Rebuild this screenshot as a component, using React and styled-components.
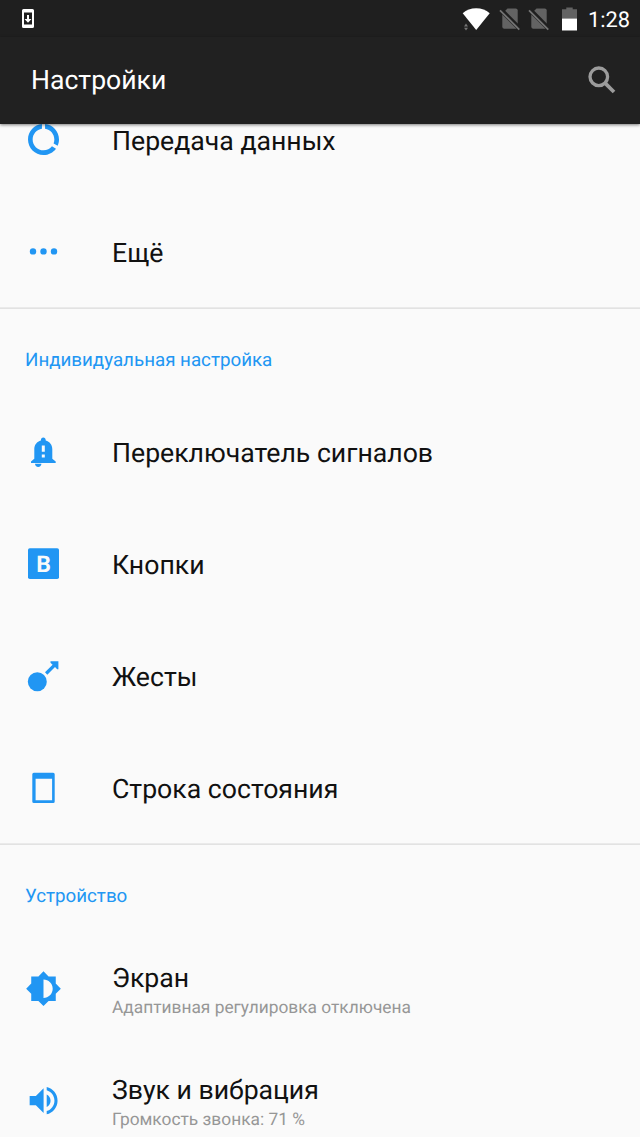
import React from "react";
import styled, { createGlobalStyle } from "styled-components";

const BLUE = "#2196f3";

const sections = [
  {
    rows: [
      { icon: "data", title: "Передача данных" },
      { icon: "more", title: "Ещё" },
    ],
  },
  {
    header: "Индивидуальная настройка",
    rows: [
      { icon: "bell", title: "Переключатель сигналов" },
      { icon: "buttons", title: "Кнопки" },
      { icon: "gesture", title: "Жесты" },
      { icon: "statusbar", title: "Строка состояния" },
    ],
  },
  {
    header: "Устройство",
    rows: [
      { icon: "display", title: "Экран", summary: "Адаптивная регулировка отключена" },
      { icon: "sound", title: "Звук и вибрация", summary: "Громкость звонка: 71 %" },
    ],
  },
];

const icons = {
  data: (
    <path
      transform="translate(0.9 0.9) scale(1.55)"
      d="M13 2.05v3.03c3.39.49 6 3.39 6 6.92 0 .9-.18 1.75-.48 2.54l2.6 1.53c.56-1.24.88-2.62.88-4.07 0-5.18-3.95-9.45-9-9.95zM12 19c-3.87 0-7-3.13-7-7 0-3.53 2.61-6.43 6-6.92V2.05c-5.06.5-9 4.76-9 9.95 0 5.52 4.47 10 9.99 10 3.31 0 6.24-1.61 8.06-4.09l-2.6-1.53C16.17 17.98 14.21 19 12 19z"
    />
  ),
  more: (
    <>
      <circle cx="9" cy="19.4" r="3.2" />
      <circle cx="19.5" cy="19.4" r="3.2" />
      <circle cx="30" cy="19.4" r="3.2" />
    </>
  ),
  bell: (
    <>
      <path
        fillRule="evenodd"
        d="M19.3 5.4c1.4 0 2.4 1 2.4 2.6v.5c4 1.1 6.6 4.4 6.6 8.7v9.6l3.4 2.8V31H7v-1.4l3.3-2.8v-9.6c0-4.3 2.6-7.6 6.6-8.7V8c0-1.6 1-2.6 2.4-2.6zM17.8 13.6v6.2h3v-6.2zM17.8 22.4v3.2h3v-3.2z"
      />
      <path d="M11 31.8h6.4c0 1.9-1.4 3.2-3.2 3.2S11 33.7 11 31.8z" />
    </>
  ),
  buttons: (
    <>
      <rect x="4" y="4.3" width="31" height="30.7" rx="1.8" />
      <text x="19.5" y="28.2" fill="#fafafa" fontSize="23" fontWeight="700" textAnchor="middle">
        B
      </text>
    </>
  ),
  gesture: (
    <>
      <circle cx="13.3" cy="25.7" r="9.5" />
      <path d="M26.5 5.3h7.9v8h-1.2l-2.2-2.2-7.7 7.6-2.3-2.4 7.6-7.5-2.1-2z" />
    </>
  ),
  statusbar: (
    <path
      fillRule="evenodd"
      d="M9.8 4.7h19.4q1.5 0 1.5 1.5v27.3q0 1.5-1.5 1.5H9.8q-1.5 0-1.5-1.5V6.2q0-1.5 1.5-1.5zM11.6 10.7v21.6h16.5V10.7z"
    />
  ),
  display: (
    <path
      transform="translate(1.1 2.3) scale(1.533)"
      d="M20 15.31L23.31 12 20 8.69V4h-4.69L12 .69 8.69 4H4v4.69L.69 12 4 15.31V20h4.69L12 23.31 15.31 20H20v-4.69zM12 18V6c3.31 0 6 2.69 6 6s-2.69 6-6 6z"
    />
  ),
  sound: (
    <path
      transform="translate(1 2.1) scale(1.55)"
      d="M3 9v6h4l5 5V4L7 9H3zm13.5 3c0-1.77-1.02-3.29-2.5-4.03v8.05c1.48-.73 2.5-2.25 2.5-4.02zM14 3.23v2.06c2.89.86 5 3.54 5 6.71s-2.11 5.85-5 6.71v2.06c4.01-.91 7-4.49 7-8.77s-2.99-7.86-7-8.77z"
    />
  ),
};

function NoSim() {
  return (
    <svg width="22" height="24" viewBox="0 0 22 24">
      <path fill="#636363" d="M8.5 1.5h8.2q2 0 2 2v16.2q0 2-2 2H5.3q-2 0-2-2V6.7z" />
      <path stroke="#1f1f1f" strokeWidth="4.6" d="M1.6 2.5L21.5 22.4" />
      <path stroke="#757575" strokeWidth="1.7" d="M1 3.3L20.3 22.6" />
    </svg>
  );
}

export default function App() {
  return (
    <>
      <GlobalStyle />
      <Screen>
        <StatusBar>
          <svg width="12" height="19" viewBox="0 0 12 19">
            <path
              fill="#fff"
              fillRule="evenodd"
              d="M1.5 0h9Q12 0 12 1.5v16q0 1.5-1.5 1.5h-9Q0 19 0 17.5v-16Q0 0 1.5 0zM2 3.5v12h8v-12z"
            />
            <path fill="#fff" d="M5 6h2v4h2.5L6 13.7 2.5 10H5z" />
          </svg>
          <StatusIcons>
            <Wifi width="30" height="24" viewBox="0 0 30 24">
              <path fill="#fff" d="M2.7 6.2C6.3 3.1 11 1.3 16.2 1.3s9.8 1.8 13.5 4.9L16.2 23z" />
              <path fill="#757575" d="M4 19.5L6 16.5l2 3zM4 20.8h4L6 23.5z" />
            </Wifi>
            <NoSim />
            <NoSim />
            <Battery width="15" height="24" viewBox="0 0 15 24">
              <path fill="#636363" d="M4.3 .5h6.4v1.8H15v9.2H0V2.3h4.3z" />
              <path fill="#fff" d="M0 11.5h15v12H0z" />
            </Battery>
            <Clock>1:28</Clock>
          </StatusIcons>
        </StatusBar>
        <AppBar>
          <Heading>Настройки</Heading>
          <svg width="28" height="28" viewBox="0 0 28 28">
            <circle cx="10.8" cy="10.8" r="8.8" fill="none" stroke="#9c9c9c" strokeWidth="3.3" />
            <path stroke="#9c9c9c" strokeWidth="3.7" d="M16.6 16.6L26 26" />
          </svg>
        </AppBar>
        <List>
          {sections.map((section, index) => (
            <Section key={index} $first={index === 0}>
              {section.header && <SectionHeader>{section.header}</SectionHeader>}
              {section.rows.map((row) => (
                <Row key={row.icon}>
                  <RowIcon viewBox="0 0 40 40">{icons[row.icon]}</RowIcon>
                  <RowText>
                    <RowTitle>{row.title}</RowTitle>
                    {row.summary && <RowSummary>{row.summary}</RowSummary>}
                  </RowText>
                </Row>
              ))}
            </Section>
          ))}
        </List>
      </Screen>
    </>
  );
}

const GlobalStyle = createGlobalStyle`
  body {
    margin: 0;
    background: #fafafa;
    font-family: Roboto, "Liberation Sans", sans-serif;
    text-rendering: geometricPrecision;
  }
  svg {
    display: block;
    flex-shrink: 0;
  }
`;
const Screen = styled.div`
  display: flex;
  flex-direction: column;
  width: 640px;
  height: 1137px;
  overflow: hidden;
  background: #fafafa;
`;
const StatusBar = styled.div`
  display: flex;
  justify-content: space-between;
  align-items: center;
  height: 37px;
  flex-shrink: 0;
  box-sizing: border-box;
  padding: 0 10px 0 22px;
  background: #1f1f1f;
`;
const StatusIcons = styled.div`
  display: flex;
  align-items: center;
  gap: 7px;
`;
const Wifi = styled.svg`
  margin-right: 2px;
`;
const Battery = styled.svg`
  margin-left: 5px;
`;
const Clock = styled.span`
  margin-left: 4px;
  padding-top: 4px;
  color: #fff;
  font-size: 21.8px;
  line-height: 26px;
`;
const AppBar = styled.header`
  display: flex;
  justify-content: space-between;
  align-items: center;
  height: 87px;
  flex-shrink: 0;
  box-sizing: border-box;
  padding: 0 24px 2px 31px;
  background: #212121;
  box-shadow: 0 1px 3px rgba(0, 0, 0, 0.5);
  z-index: 1;
`;
const Heading = styled.h1`
  margin: 0;
  padding-top: 2px;
  color: #fff;
  font-size: 26.6px;
  font-weight: 400;
  line-height: 32px;
`;
const List = styled.main`
  flex: 1;
  min-height: 0;
  overflow: hidden;
`;
const Section = styled.section`
  margin-top: ${(props) => (props.$first ? "-40px" : "0")};
  box-shadow: ${(props) => (props.$first ? "none" : "inset 0 1px 0 #e2e2e2, 0 -1px 0 #eaeaea")};
`;
const SectionHeader = styled.h2`
  margin: 0;
  height: 88px;
  box-sizing: border-box;
  padding: 40px 25px 0;
  color: ${BLUE};
  font-size: 18.75px;
  font-weight: 400;
  line-height: 24px;
`;
const Row = styled.div`
  display: flex;
  align-items: center;
  height: 112px;
  padding-left: 24px;
`;
const RowIcon = styled.svg`
  width: 40px;
  height: 40px;
  fill: ${BLUE};
`;
const RowText = styled.div`
  margin-left: 48px;
  padding-top: 2px;
`;
const RowTitle = styled.div`
  color: #111;
  font-size: 26.65px;
  line-height: 32px;
`;
const RowSummary = styled.div`
  margin-top: 3px;
  margin-bottom: -3px;
  color: #969696;
  font-size: 17.33px;
  line-height: 22px;
`;
